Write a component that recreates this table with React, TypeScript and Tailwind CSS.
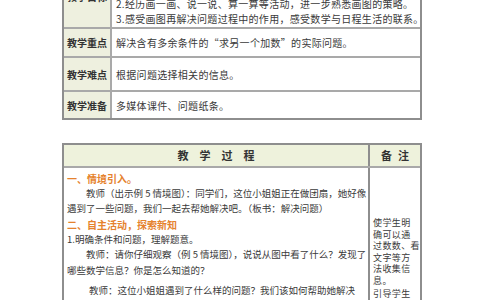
import React from "react";

const font = { fontFamily: '"Noto Sans CJK SC", "Noto Sans", sans-serif' };

type InfoRow = {
  label: string
  lines: string[]
  h: string
}

const rows: InfoRow[] = [
  {
    label: "教学目标",
    lines: [
      "1.在解决实际问题的过程中，学会用画图的策略分析和解决含有多",
      "余条件的实际问题，提高解决问题的能力。",
      "2.经历画一画、说一说、算一算等活动，进一步熟悉画图的策略。",
      "3.感受画图再解决问题过程中的作用，感受数学与日程生活的联系。",
    ],
    h: "h-[62px]",
  },
  { label: "教学重点", lines: ["解决含有多余条件的“求另一个加数”的实际问题。"], h: "h-[29px]" },
  { label: "教学难点", lines: ["根据问题选择相关的信息。"], h: "h-[34px]" },
  { label: "教学准备", lines: ["多媒体课件、问题纸条。"], h: "h-[28px]" },
];

const notes = ["使学生明", "确可以通", "过数数、看", "文字等方", "法收集信", "息。"];

export default function App() {
  return (
    <div className="w-[484px] h-[300px] overflow-hidden bg-white text-[#3a3a3a]" style={font}>
      <div className="pl-[62px] flex flex-col">
        {/* top info table */}
        <div className="-mt-[35px] w-[360px] border-x-2 border-b-2 border-[#8e8e8e]">
          {rows.map((row, i) => (
            <div key={i} className={`flex ${row.h} ${i > 0 ? "border-t-2 border-[#a9a9a9]" : ""}`}>
              <div className="w-[48px] shrink-0 bg-[#eef0df] border-r-2 border-[#a9a9a9] flex items-center justify-center text-[10px] font-bold text-[#333]">
                {row.label}
              </div>
              <div className="flex-1 pl-[4px] flex flex-col justify-center text-[10px] leading-[15px] tracking-[0.3px] whitespace-nowrap overflow-hidden">
                {row.lines.map((l, j) => (
                  <div key={j}>{l}</div>
                ))}
              </div>
            </div>
          ))}
        </div>

        {/* process table */}
        <div className="mt-[23px] w-[360px] border-2 border-b-0 border-[#8e8e8e]">
          <div className="flex h-[23px] bg-[#eef2dc] border-b-2 border-[#a9a9a9] text-[11px] font-bold text-[#333]">
            <div className="w-[304px] flex items-center justify-center tracking-[11px] pl-[11px]">教学过程</div>
            <div className="flex-1 border-l-2 border-[#8e8e8e] flex items-center justify-center tracking-[6px] pl-[6px] whitespace-nowrap">备注</div>
          </div>
          <div className="flex">
            <div className="w-[304px] pl-[3px] pt-[3px] text-[9.5px] leading-[15px] whitespace-nowrap overflow-hidden">
              <div className="text-[#e5822d] font-bold text-[10px]">一、情境引入。</div>
              <div className="pl-[19px]">教师（出示例 5 情境图）：同学们，这位小姐姐正在做团扇，她好像</div>
              <div>遇到了一些问题，我们一起去帮她解决吧。（板书：解决问题）</div>
              <div className="text-[#e5822d] font-bold text-[10px] leading-[14px] mt-[2px]">二、自主活动，探索新知</div>
              <div>1.明确条件和问题，理解题意。</div>
              <div className="pl-[19px]">教师：请你仔细观察（例 5 情境图），说说从图中看了什么？发现了</div>
              <div className="mt-[1px]">哪些数学信息？你是怎么知道的？</div>
              <div className="pl-[22px] mt-[5px]">教师：这位小姐姐遇到了什么样的问题？我们该如何帮助她解决</div>
            </div>
            <div className="flex-1 border-l-2 border-[#8e8e8e] pl-[3px] pt-[49px] text-[9px] leading-[11.5px] tracking-[0.4px] whitespace-nowrap overflow-hidden">
              {notes.map((n, i) => (
                <div key={i}>{n}</div>
              ))}
              <div className="mt-[2px]">引导学生</div>
            </div>
          </div>
        </div>
      </div>
    </div>
  );
}
